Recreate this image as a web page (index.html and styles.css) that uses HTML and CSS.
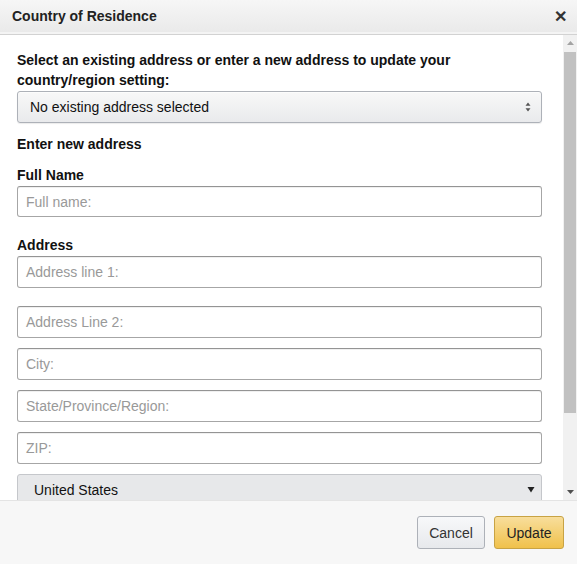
FILE: index.html
```html
<!DOCTYPE html>
<html>
<head>
<meta charset="utf-8">
<link rel="stylesheet" href="styles.css">
</head>
<body>
<div class="modal">
  <div class="header">
    <h1 class="title">Country of Residence</h1>
    <span class="close">✕</span>
  </div>
  <div class="body">
    <div class="content">
      <p class="lead">Select an existing address or enter a new address to update your country/region setting:</p>
      <div class="select select-existing">
        <span>No existing address selected</span>
        <svg class="updown" width="6" height="10" viewBox="0 0 6 10"><path d="M3 0.5 L5.5 3.8 H0.5 Z M3 9.5 L5.5 6.2 H0.5 Z" fill="#555"/></svg>
      </div>
      <h2 class="section">Enter new address</h2>
      <label class="label">Full Name</label>
      <div class="input input-name">Full name:</div>
      <label class="label label-address">Address</label>
      <div class="input input-first">Address line 1:</div>
      <div class="input input-second">Address Line 2:</div>
      <div class="input">City:</div>
      <div class="input">State/Province/Region:</div>
      <div class="input">ZIP:</div>
      <div class="select select-country">
        <span>United States</span>
        <svg width="8" height="7" viewBox="0 0 8 7"><path d="M0.5 1 H7.5 L4 6.5 Z" fill="#222"/></svg>
      </div>
    </div>
    <div class="scrollbar">
      <svg class="arrow" width="7" height="4" viewBox="0 0 7 4"><path d="M0 4 L3.5 0 L7 4 Z" fill="#a3a3a3"/></svg>
      <div class="thumb"></div>
      <div class="track"></div>
      <svg class="arrow" width="7" height="4" viewBox="0 0 7 4"><path d="M0 0 L7 0 L3.5 4 Z" fill="#505050"/></svg>
    </div>
  </div>
  <div class="footer">
    <button class="btn btn-cancel">Cancel</button>
    <button class="btn btn-update">Update</button>
  </div>
</div>
</body>
</html>
```

FILE: styles.css
```css
* { box-sizing: border-box; }
html, body {
  margin: 0;
  padding: 0;
  background: #fff;
}
body {
  font-family: "Liberation Sans", Arial, sans-serif;
  color: #111;
}
.modal {
  width: 577px;
  height: 564px;
  display: flex;
  flex-direction: column;
  overflow: hidden;
}
.header {
  height: 35px;
  flex: none;
  display: flex;
  align-items: center;
  justify-content: space-between;
  padding: 0 10px 2px 12px;
  background: linear-gradient(#f6f6f6, #e9e9e9);
  border-bottom: 1px solid #d2d2d2;
  box-shadow: inset 0 -2px 0 #f4f4f4;
}
.title {
  margin: 0;
  font-size: 14px;
  font-weight: bold;
  color: #222;
}
.close {
  font-size: 16px;
  font-weight: bold;
  color: #333;
}
.body {
  flex: 1;
  display: flex;
  min-height: 0;
}
.content {
  flex: 1;
  overflow: hidden;
  padding: 15px 21px 0 17px;
  display: flex;
  flex-direction: column;
}
.lead {
  margin: 0;
  font-size: 14px;
  line-height: 20px;
  font-weight: bold;
  color: #111;
}
.select {
  flex: none;
  display: flex;
  align-items: center;
  justify-content: space-between;
  border: 1px solid #adb1b8;
  border-radius: 3px;
  font-size: 14px;
  color: #111;
}
.select-existing {
  margin-top: 1px;
  height: 32px;
  padding: 0 10px 0 12px;
  background: linear-gradient(#f8f8f8, #e9eaec);
  box-shadow: 0 1px 0 rgba(255,255,255,0.6) inset, 0 1px 1px rgba(0,0,0,0.08);
}
.section {
  margin: 11px 0 0;
  font-size: 14px;
  line-height: 20px;
  font-weight: bold;
  color: #111;
}
.label {
  display: block;
  margin-top: 11px;
  font-size: 14px;
  line-height: 20px;
  font-weight: bold;
  color: #111;
}
.label-address {
  margin-top: 18px;
}
.input {
  flex: none;
  height: 32px;
  margin-top: 10px;
  padding: 0 8px;
  display: flex;
  align-items: center;
  border: 1px solid #a6a6a6;
  border-top-color: #949494;
  border-radius: 3px;
  box-shadow: inset 0 1px 0 rgba(0,0,0,0.06);
  font-size: 14px;
  color: #999;
  background: #fff;
}
.input-name {
  height: 31px;
}
.label + .input {
  margin-top: 1px;
}
.input-second {
  margin-top: 18px;
}
.select-country {
  margin-top: 10px;
  height: 31px;
  padding: 0 6px 0 16px;
  background: #e7e8ea;
  border-color: #c5c7cb;
}
.scrollbar {
  width: 14px;
  flex: none;
  background: #f1f1f1;
  display: flex;
  flex-direction: column;
  align-items: center;
}
.arrow {
  flex: none;
  margin: 6px 0;
}
.thumb {
  width: 12px;
  height: 361px;
  margin-top: 1px;
  background: #c1c1c1;
  flex: none;
}
.track {
  flex: 1;
}
.footer {
  height: 64px;
  flex: none;
  display: flex;
  justify-content: flex-end;
  align-items: center;
  gap: 9px;
  padding: 0 13px 0 0;
  background: #f7f7f7;
  border-top: 1px solid #e4e4e4;
}
.btn {
  height: 33px;
  font-family: "Liberation Sans", Arial, sans-serif;
  font-size: 14px;
  color: #111;
  border-radius: 3px;
  padding: 0;
  cursor: pointer;
}
.btn-cancel {
  width: 68px;
  background: linear-gradient(#f7f8fa, #e7e9ec);
  border: 1px solid #adb1b8;
  color: #333;
}
.btn-update {
  width: 70px;
  background: linear-gradient(#f8de9c, #f0c14b);
  border: 1px solid #c8a344;
  color: #222;
}
```
